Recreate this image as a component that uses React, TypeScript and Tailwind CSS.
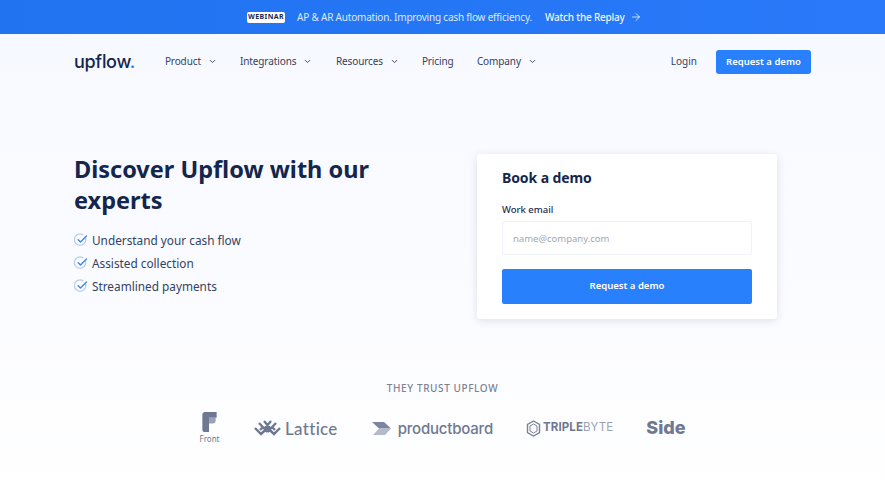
import { ArrowRight, ChevronDown } from 'lucide-react'

const nav = [
  { label: 'Product', menu: true, width: 'w-[75px]' },
  { label: 'Integrations', menu: true, width: 'w-[96px]' },
  { label: 'Resources', menu: true, width: 'w-[86px]' },
  { label: 'Pricing', menu: false, width: 'w-[55px]' },
  { label: 'Company', menu: true, width: 'w-[70px]' },
]

const points = ['Understand your cash flow', 'Assisted collection', 'Streamlined payments']

function Check() {
  return (
    <svg width="14" height="14" viewBox="0 0 14 14" fill="none" className="shrink-0">
      <path d="M11.6 5.2A5.7 5.7 0 1 1 8.8 1.6" stroke="#b9cdf0" strokeWidth="1.3" strokeLinecap="round" />
      <path d="M4.2 6.8l2.3 2.3 6-6" stroke="#3f86ea" strokeWidth="1.4" strokeLinecap="round" strokeLinejoin="round" />
    </svg>
  )
}

function Logos() {
  return (
    <div className="mt-[17px] flex items-center pl-[199px] text-[#6f7890]">
      {/* Front */}
      <div className="flex w-[21px] flex-col items-center">
        <svg width="15" height="20" viewBox="0 0 15 21">
          <path d="M0 3a3 3 0 0 1 3-3h12v6H7v15H2a2 2 0 0 1-2-2z" fill="#6e7895" />
          <path d="M7 6h7v3a3 3 0 0 1-3 3H7z" fill="#9aa2b8" />
        </svg>
        <span className="mt-[2px] text-[8px] leading-[10px]">Front</span>
      </div>
      {/* Lattice */}
      <div className="ml-[34px] flex items-center">
        <svg width="27" height="16" viewBox="0 0 27 16" fill="none" stroke="#6e7890" strokeWidth="2.4">
          <path d="M1 8l6 6 6.5-6 6.500 6 6-6M5 3l8.500 9M22 3l-8.500 9M10 1l6 7M17 1l-6 7M6 10l3-3M21 10l-3-3" />
        </svg>
        <span className="ml-[4px] font-['Lato',sans-serif] text-[17px] leading-none font-medium tracking-[0.3px]">Lattice</span>
      </div>
      {/* productboard */}
      <div className="ml-[34px] flex items-center">
        <svg width="20" height="13" viewBox="0 0 20 13">
          <path d="M0 0h12l7 6.5H7z" fill="#7b84a0" />
          <path d="M7 6.5h12L13 13H1z" fill="#b4bac9" />
        </svg>
        <span className="ml-[6px] font-['Inter',sans-serif] text-[15px] leading-none font-medium tracking-[-0.2px]">productboard</span>
      </div>
      {/* Triplebyte */}
      <div className="ml-[33px] flex items-center">
        <svg width="15" height="17" viewBox="0 0 15 17" fill="none" stroke="#7a8296">
          <path d="M7.5 1l6 3.5v8l-6 3.5-6-3.5v-8z" strokeWidth="1.4" />
          <path d="M7.5 4l3.5 2v5l-3.500 2L4 11V6z" strokeWidth="1" />
        </svg>
        <span className="ml-[2px] font-['Inter',sans-serif] text-[11.5px] leading-none font-bold tracking-[0.1px]">
          TRIPLE<span className="font-normal text-[#9aa1b2]">BYTE</span>
        </span>
      </div>
      {/* Side */}
      <span className="ml-[33px] font-['Inter',sans-serif] text-[18px] leading-none font-extrabold">Side</span>
    </div>
  )
}

export default function App() {
  return (
    <div className="h-[502px] w-[885px] overflow-hidden bg-gradient-to-b from-[#f6f9ff] via-[#fafbff] to-[#ffffff] font-['Noto_Sans',sans-serif] text-[#16264c]">
      <div className="flex h-[34px] items-center bg-gradient-to-r from-[#2173f0] to-[#2979fa] pl-[247px] text-[10px] tracking-[-0.2px] text-[#dbe8ff]">
        <span className="flex h-[11px] w-[38px] items-center justify-center rounded-[2px] bg-white text-[7px] font-bold tracking-[0.4px] text-[#1a2a4d]">WEBINAR</span>
        <span className="ml-[12px]">AP &amp; AR Automation. Improving cash flow efficiency.</span>
        <span className="ml-[13px] font-medium text-[#eef4ff]">Watch the Replay</span>
        <ArrowRight size={12} strokeWidth={1.5} className="ml-[5px] text-white" />
      </div>

      <header className="flex h-[55px] items-center pr-[74px] pl-[74px]">
        <span className="font-['Inter',sans-serif] text-[18px] leading-none font-medium tracking-[-0.3px] text-[#14264d]">
          upflow<span className="text-[#2a7bf6]">.</span>
        </span>
        <nav className="ml-[30px] flex items-center text-[10px] tracking-[-0.1px] text-[#33425f]">
          {nav.map(({ label, menu, width }) => (
            <span key={label} className={`flex items-center ${width}`}>
              {label}
              {menu && <ChevronDown size={9} strokeWidth={2.5} className="ml-[7px]" />}
            </span>
          ))}
        </nav>
        <span className="ml-auto text-[10px] text-[#33425f]">Login</span>
        <button className="mt-[1px] ml-[19px] h-[24px] w-[95px] rounded-[3px] bg-[#2880fd] text-[9.5px] font-semibold text-white">Request a demo</button>
      </header>

      <main className="mt-[65px] flex items-start pl-[74px]">
        <div className="w-[403px]">
          <h1 className="w-[320px] text-[23.5px] leading-[31px] font-bold text-[#14264d]">Discover Upflow with our experts</h1>
          <ul className="mt-[16px] flex flex-col gap-[7px] text-[11.8px] leading-[16px] text-[#33425f]">
            {points.map(point => (
              <li key={point} className="flex items-center gap-[4px]">
                <Check />
                {point}
              </li>
            ))}
          </ul>
        </div>
        <form className="h-[165px] w-[300px] rounded-[3px] bg-white px-[25px] pt-[14px] shadow-[0_2px_8px_rgba(40,60,110,0.14)]">
          <h2 className="text-[14px] leading-[20px] font-bold tracking-[-0.1px] text-[#14264d]">Book a demo</h2>
          <label className="mt-[15px] block text-[9.5px] leading-[14px] font-medium text-[#1f2d4d]">Work email</label>
          <input
            placeholder="name@company.com"
            className="mt-[4px] h-[34px] w-[250px] rounded-[2px] border border-[#f0f2f7] px-[10px] text-[9.5px] outline-none placeholder:text-[#a3a8b3]"
          />
          <button type="button" className="mt-[14px] h-[35px] w-[250px] rounded-[2px] bg-[#2880fd] text-[9.5px] font-semibold text-white">Request a demo</button>
        </form>
      </main>

      <p className="mt-[62px] text-center text-[10px] leading-[14px] font-medium tracking-[0.6px] text-[#7b8294]">THEY TRUST UPFLOW</p>
      <Logos />
    </div>
  )
}
